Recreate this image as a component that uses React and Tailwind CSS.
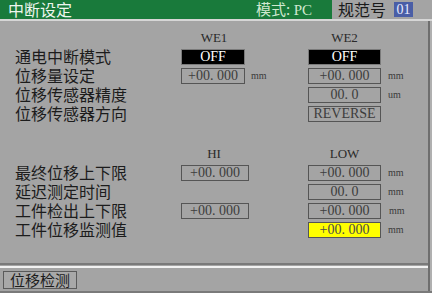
import React from "react";

const cjk = { fontFamily: '"Noto Sans CJK SC", "Noto Sans", sans-serif' };
const serif = { fontFamily: '"Liberation Serif", "DejaVu Serif", serif' };

function Box({ children, w = "w-[64px]", kind = "plain" }) {
  const look =
    kind === "off"
      ? "bg-black text-white border-[#7a7a7a]"
      : kind === "yellow"
      ? "bg-[#ffff00] text-[#4a4a4a] border-[#555]"
      : "bg-transparent text-[#3c3c3c] border-[#555]";
  return (
    <div
      className={`${w} h-[16px] border flex items-center justify-center text-[14px] leading-[14px] ${look}`}
      style={serif}
    >
      {children}
    </div>
  );
}

function Unit({ children, pl = "pl-[7px]" }) {
  return (
    <span className={`${pl} text-[10px] leading-[12px] text-[#3a3a3a]`} style={serif}>
      {children}
    </span>
  );
}

function Row({ label, a, aUnit, b, bUnit }) {
  return (
    <div className="grid grid-cols-[166px_68px_59px_73px_1fr] h-[19px] items-center">
      <div className="text-[16px] leading-[19px] text-[#1c1c1c] whitespace-nowrap" style={cjk}>
        {label}
      </div>
      <div className="flex items-center">{a}</div>
      <div className="flex items-center">{aUnit}</div>
      <div className="flex items-center">{b}</div>
      <div className="flex items-center">{bUnit}</div>
    </div>
  );
}

function ColHead({ a, b }) {
  return (
    <div
      className="grid grid-cols-[166px_68px_59px_73px_1fr] h-[19px] items-center text-[13px] leading-[19px] text-[#2a2a2a]"
      style={serif}
    >
      <div />
      <div className="text-center pr-[2px]">{a}</div>
      <div />
      <div className="text-center">{b}</div>
      <div />
    </div>
  );
}

export default function App() {
  return (
    <div className="w-[432px] h-[293px] bg-[#a4a4a4] flex flex-col overflow-hidden">
      {/* header */}
      <div className="h-[19px] flex">
        <div className="flex-1 bg-[#197a3b] flex items-center justify-between pl-[8px] pr-[20px]">
          <span className="text-[16px] leading-[19px] text-[#eef6ee]" style={cjk}>
            中断设定
          </span>
          <span className="text-[15px] leading-[19px] text-[#cfe8cf]" style={cjk}>
            模式: <span style={serif}>PC</span>
          </span>
        </div>
        <div className="w-[100px] flex items-center pl-[6px]">
          <span className="text-[16px] leading-[19px] text-[#1a1a1a]" style={cjk}>
            规范号
          </span>
          <span
            className="ml-[8px] w-[19px] h-[15px] bg-[#4a5ea6] text-[#e8ecff] text-[14px] leading-[15px] flex items-center justify-center"
            style={serif}
          >
            01
          </span>
        </div>
      </div>
      <div className="h-[2px] bg-[#d6d6d6]" />

      {/* body */}
      <div className="flex-1 flex">
        <div className="flex-1 border-r-2 border-[#6e6e6e] flex flex-col">
          <div className="flex-1 pl-[15px] pt-[7px]">
            <ColHead a="WE1" b="WE2" />
            <Row
              label="通电中断模式"
              a={<Box kind="off">OFF</Box>}
              b={<Box kind="off" w="w-[73px]">OFF</Box>}
            />
            <Row
              label="位移量设定"
              a={<Box>+00. 000</Box>}
              aUnit={<Unit pl="pl-[2px]">mm</Unit>}
              b={<Box w="w-[73px]">+00. 000</Box>}
              bUnit={<Unit>mm</Unit>}
            />
            <Row
              label="位移传感器精度"
              b={<Box w="w-[73px]">00. 0</Box>}
              bUnit={<Unit>um</Unit>}
            />
            <Row
              label="位移传感器方向"
              b={<Box w="w-[73px]">REVERSE</Box>}
            />

            <div className="mt-[21px]">
              <ColHead a="HI" b="LOW" />
              <Row
                label="最终位移上下限"
                a={<Box w="w-[68px]">+00. 000</Box>}
                b={<Box w="w-[73px]">+00. 000</Box>}
                bUnit={<Unit>mm</Unit>}
              />
              <Row
                label="延迟测定时间"
                b={<Box w="w-[73px]">00. 0</Box>}
                bUnit={<Unit>mm</Unit>}
              />
              <Row
                label="工件检出上下限"
                a={<Box w="w-[68px]">+00. 000</Box>}
                b={<Box w="w-[73px]">+00. 000</Box>}
                bUnit={<Unit pl="pl-[8px]">mm</Unit>}
              />
              <Row
                label="工件位移监测值"
                b={<Box kind="yellow" w="w-[73px]">+00. 000</Box>}
                bUnit={<Unit>mm</Unit>}
              />
            </div>
          </div>
          <div className="h-[2px] bg-[#7a7a7a]" />
          <div className="h-[1px] bg-[#a4a4a4]" />
          <div className="h-[2px] bg-[#f2f2f2]" />
          <div className="flex-none h-[23px] flex items-center pl-[3px]">
            <div
              className="w-[74px] h-[18px] border border-[#5a5a5a] bg-[#a8a8a8] flex items-center justify-center text-[15px] leading-[16px] text-[#1c1c1c]"
              style={cjk}
            >
              位移检测
            </div>
          </div>
        </div>
        <div className="w-[2px] bg-[#b0b0b0]" />
      </div>
      <div className="h-[2px] bg-[#7a7a7a]" />
    </div>
  );
}
